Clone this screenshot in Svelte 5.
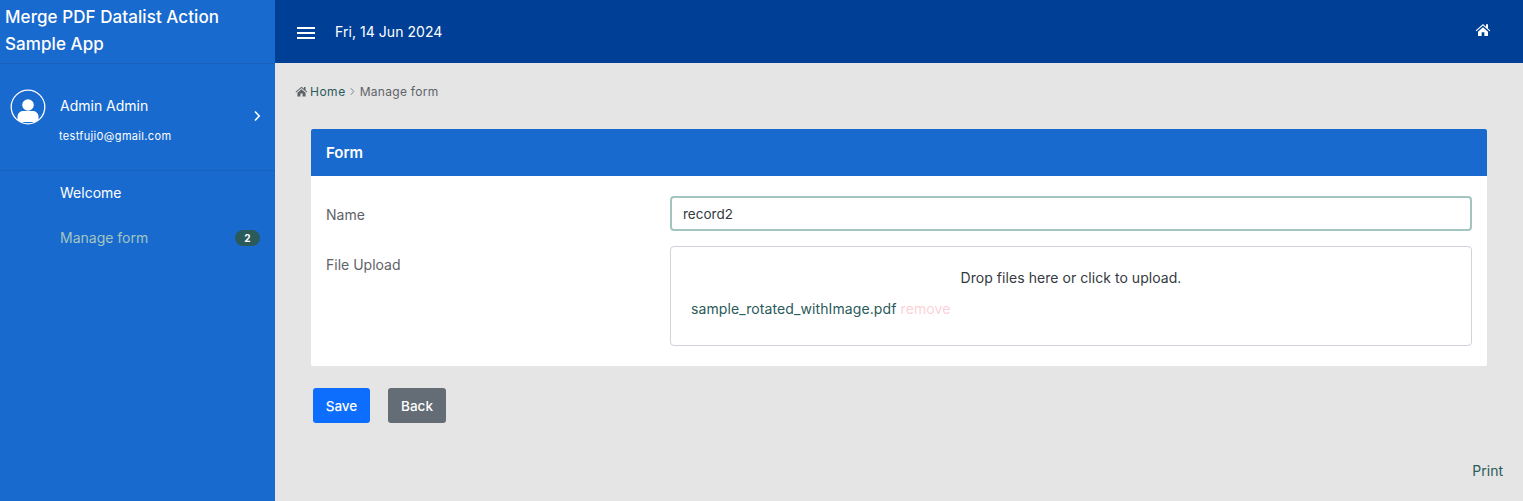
<script>
  const menu = [
    { label: 'Welcome', active: true },
    { label: 'Manage form', badge: 2 }
  ];
  const homePath = 'M12 3 1 12.6l1.1 1.2L12 5.4l9.900 8.4 1.100-1.200-3.500-3V3.500h-3v3.500zM4.500 14.500V21h5.500v-5.500h4V21h5.500v-6.500L12 8z';
</script>

<div class="shell">
  <aside class="sidebar">
    <div class="brand">Merge PDF Datalist Action Sample App</div>
    <div class="user">
      <svg class="avatar" viewBox="0 0 36 36" width="36" height="36">
        <defs>
          <clipPath id="round"><circle cx="18" cy="18" r="16.500" /></clipPath>
        </defs>
        <circle cx="18" cy="18" r="16.800" fill="none" stroke="#fff" stroke-width="1.300" />
        <g clip-path="url(#round)" fill="#fff">
          <circle cx="18" cy="16" r="5.800" />
          <path d="M7.500 33v-5.500c0-3.500 3-5.500 6-5.500h9c3 0 6 2 6 5.500V33z" />
        </g>
      </svg>
      <div class="who">
        <div class="name">Admin Admin</div>
        <div class="email">testfuji0@gmail.com</div>
      </div>
      <svg class="chev" viewBox="0 0 8 12" width="8" height="12">
        <path d="M2 1.500 6.200 6 2 10.500" fill="none" stroke="#fff" stroke-width="1.600" />
      </svg>
    </div>
    <nav class="menu">
      {#each menu as item}
        <div class="item" class:active={item.active}>
          <span>{item.label}</span>
          {#if item.badge}<span class="badge">{item.badge}</span>{/if}
        </div>
      {/each}
    </nav>
  </aside>

  <div class="main">
    <header class="topbar">
      <div class="burger"><i></i><i></i><i></i></div>
      <div class="date">Fri, 14 Jun 2024</div>
      <svg class="tophome" viewBox="0 0 24 24" width="16" height="16"><path d={homePath} fill="#fff" /></svg>
    </header>

    <div class="content">
      <div class="crumbs">
        <svg viewBox="0 0 24 24" width="13" height="13"><path d={homePath} fill="#5f6368" /></svg>
        <span class="link">Home</span>
        <svg class="sep" viewBox="0 0 6 10" width="5" height="9"><path d="M1 1l3.500 4L1 9" fill="none" stroke="#6c757d" stroke-width="1" /></svg>
        <span>Manage form</span>
      </div>

      <section class="card">
        <div class="card-head">Form</div>
        <div class="card-body">
          <div class="row">
            <label class="lbl" for="name">Name</label>
            <input id="name" class="input" value="record2" />
          </div>
          <div class="row upload-row">
            <div class="lbl">File Upload</div>
            <div class="drop">
              <div class="hint">Drop files here or click to upload.</div>
              <div class="file">sample_rotated_withImage.pdf <span class="remove">remove</span></div>
            </div>
          </div>
        </div>
      </section>

      <div class="actions">
        <button class="btn save">Save</button>
        <button class="btn back">Back</button>
      </div>

      <div class="print">Print</div>
    </div>
  </div>
</div>

<style>
  :global(body) {
    margin: 0;
    font-family: Inter, 'Liberation Sans', sans-serif;
    background: #e5e5e5;
  }
  .shell {
    display: flex;
    height: 501px;
    overflow: hidden;
  }
  .sidebar {
    width: 275px;
    flex-shrink: 0;
    background: #196ace;
    color: #fff;
  }
  .brand {
    height: 64px;
    box-sizing: border-box;
    padding: 4px 30px 0 5px;
    font-size: 17px;
    font-weight: 500;
    line-height: 27px;
    letter-spacing: 0.07px;
    border-bottom: 1px solid #1861bd;
  }
  .user {
    height: 107px;
    box-sizing: border-box;
    position: relative;
    display: flex;
    padding: 25px 14px 0 10px;
    border-bottom: 1px solid #1861bd;
  }
  .avatar {
    flex-shrink: 0;
  }
  .who {
    margin-left: 14px;
    flex: 1;
  }
  .name {
    font-size: 14px;
    line-height: 20px;
    margin-top: 7px;
  }
  .email {
    font-size: 11px;
    line-height: 16px;
    margin-top: 12px;
    letter-spacing: 0.33px;
    margin-left: -1px;
  }
  .chev {
    margin-top: 21px;
  }
  .menu {
    margin-top: -1px;
  }
  .item {
    display: flex;
    justify-content: space-between;
    align-items: center;
    height: 45px;
    padding: 0 15px 0 60px;
    font-size: 14px;
    color: #a2c5bf;
  }
  .item.active {
    color: #fff;
  }
  .badge {
    background: #2a5a5a;
    color: #fff;
    font-size: 10px;
    font-weight: 700;
    width: 25px;
    height: 16px;
    line-height: 16px;
    border-radius: 8px;
    text-align: center;
  }
  .main {
    flex: 1;
    min-width: 0;
    display: flex;
    flex-direction: column;
  }
  .topbar {
    height: 63px;
    flex-shrink: 0;
    background: #003f96;
    color: #fff;
    display: flex;
    align-items: center;
    padding: 0 32px 0 22px;
  }
  .burger {
    width: 18px;
    display: flex;
    flex-direction: column;
    gap: 3px;
    margin-top: 2px;
  }
  .burger i {
    display: block;
    height: 2px;
    background: #fff;
  }
  .date {
    margin-left: 20px;
    flex: 1;
    font-size: 14px;
    letter-spacing: 0.05px;
  }
  .tophome {
    margin-top: -4px;
    margin-left: -1px;
  }
  .content {
    flex: 1;
    display: flex;
    flex-direction: column;
    position: relative;
    padding: 0 36px;
  }
  .crumbs {
    margin: 19px 0 0 -16px;
    height: 19px;
    display: flex;
    align-items: center;
    gap: 3px;
    font-size: 12px;
    color: #5f6368;
    letter-spacing: 0.3px;
  }
  .link {
    color: #2a5a5a;
    margin-left: -1px;
    letter-spacing: 0.5px;
  }
  .sep {
    margin: 0 2px 0 1px;
  }
  .card {
    margin-top: 28px;
    background: #fff;
    border-radius: 2px;
    height: 237px;
  }
  .card-head {
    background: #196ace;
    color: #fff;
    height: 47px;
    line-height: 47px;
    padding-left: 15px;
    font-size: 15px;
    font-weight: 600;
    border-radius: 2px 2px 0 0;
  }
  .card-body {
    padding: 20px 15px 0;
  }
  .row {
    display: flex;
    align-items: flex-start;
    margin-bottom: 15px;
  }
  .lbl {
    width: 344px;
    flex-shrink: 0;
    padding-top: 9px;
    font-size: 14px;
    line-height: 19px;
    color: #5f6368;
  }
  .input {
    flex: 1;
    min-width: 0;
    box-sizing: border-box;
    height: 35px;
    padding: 0 11px;
    border: 2px solid #a2c5bf;
    border-radius: 4px;
    font: 13.5px Inter, 'Liberation Sans', sans-serif;
    color: #343a40;
    outline: none;
  }
  .drop {
    flex: 1;
    box-sizing: border-box;
    height: 100px;
    border: 1px solid #ced4da;
    border-radius: 4px;
    padding: 22px 20px 0;
    font-size: 14px;
    color: #343a40;
  }
  .hint {
    text-align: center;
    line-height: 18px;
    letter-spacing: 0.05px;
  }
  .file {
    margin-top: 13px;
    line-height: 18px;
    color: #2a5a5a;
    letter-spacing: 0.1px;
  }
  .remove {
    color: #fcd2d8;
  }
  .actions {
    display: flex;
    gap: 18px;
    margin: 22px 0 0 2px;
  }
  .btn {
    height: 35px;
    width: 57px;
    padding: 0;
    border: 0;
    border-radius: 3px;
    color: #fff;
    font: 500 13.5px Inter, 'Liberation Sans', sans-serif;
  }
  .back {
    width: 58px;
    background: #646c75;
  }
  .save {
    background: #0d6efd;
  }
  .print {
    position: absolute;
    right: 20px;
    bottom: 21px;
    font-size: 14px;
    line-height: 18px;
    color: #2a5a5a;
  }
</style>
